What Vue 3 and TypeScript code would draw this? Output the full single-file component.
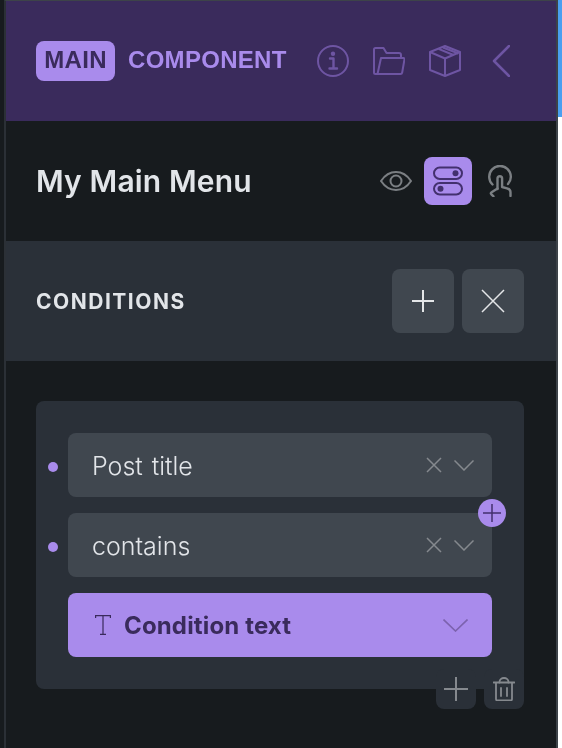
<script setup lang="ts">
const rows = ['Post title', 'contains']
</script>

<template>
  <div class="page">
    <div class="rail"></div>
    <aside class="panel">
      <header class="top">
        <div class="brand">
          <span class="badge"><span class="badge-text">MAIN</span></span>
          <span class="brand-name">COMPONENT</span>
        </div>
        <div class="top-icons">
          <svg width="32" height="32" viewBox="0 0 32 32" fill="none" stroke="#6e55a3" stroke-width="2">
            <circle cx="16" cy="16" r="15" />
            <circle cx="16" cy="8.800" r="2.200" fill="#6e55a3" stroke="none" />
            <path d="M13 13.500h3.500v9.500M12.500 23.500h7.500" stroke-width="2.400" stroke-linecap="round" stroke-linejoin="round" />
          </svg>
          <svg width="32" height="28" viewBox="0 0 32 28" fill="none" stroke="#6e55a3" stroke-width="2" stroke-linejoin="round" stroke-linecap="round">
            <path d="M4.500 27H2.500A1.500 1.500 0 0 1 1 25.500V2.500A1.500 1.500 0 0 1 2.500 1h8l3 5h12.500a2 2 0 0 1 2 2v3" />
            <path d="M8 11h22.500a1 1 0 0 1 1 1.200l-2.300 13.300a1.800 1.800 0 0 1-1.800 1.500H4.500z" />
          </svg>
          <svg width="32" height="32" viewBox="0 0 32 32" fill="none" stroke="#6e55a3" stroke-width="2" stroke-linejoin="round">
            <path d="M16 1 31 7v18l-15 6-15-6V7z" />
            <path d="M1 7l15 6.500L31 7M16 13.500V31M9.500 3.800l15 6.200M14 2.500l15.500 6" />
          </svg>
          <svg class="back" width="18" height="32" viewBox="0 0 18 32" fill="none" stroke="#6e55a3" stroke-width="2.500" stroke-linecap="round" stroke-linejoin="round">
            <path d="M17 1 2 16l15 15" />
          </svg>
        </div>
      </header>

      <section class="title-row">
        <h1 class="title">My Main Menu</h1>
        <div class="mode-icons">
          <svg width="32" height="20" viewBox="0 0 32 20" fill="none" stroke="#7b7f83" stroke-width="2">
            <path d="M1 10C5 4 10 1 16 1s11 3 15 9c-4 6-9 9-15 9S5 16 1 10z" stroke-linejoin="round" />
            <circle cx="16" cy="10" r="5.500" />
          </svg>
          <div class="mode-active">
            <svg width="30" height="30" viewBox="0 0 30 30" fill="none" stroke="#43306e" stroke-width="2">
              <rect x="1" y="1.500" width="28" height="11.500" rx="5.750" />
              <rect x="1" y="17" width="28" height="11.500" rx="5.750" />
              <circle cx="22.500" cy="7.200" r="3" fill="#43306e" stroke="none" />
              <circle cx="7.500" cy="22.800" r="3" fill="#43306e" stroke="none" />
            </svg>
          </div>
          <svg class="hand" width="24" height="32" viewBox="0 0 24 32" fill="none" stroke="#7b7f83" stroke-width="2.400" stroke-linecap="round" stroke-linejoin="round">
            <path d="M4.500 19.500A10.800 10.800 0 1 1 20 19" />
            <path d="M9.500 24V13.500a2.300 2.300 0 0 1 4.600 0V22l4.900 1.300c2 .6 3.500 2 3.500 4V31" />
            <path d="M9.500 23.500l-5.500 3.500c-1.500 1-1.500 1.500-.5 2.500l2 1.800" />
          </svg>
        </div>
      </section>

      <section class="section-head">
        <h2 class="section-title">CONDITIONS</h2>
        <div class="head-actions">
          <button type="button" class="head-btn">
            <svg width="24" height="24" viewBox="0 0 24 24" stroke="#e4e6e8" stroke-width="2" fill="none"><path d="M12 1v22M1 12h22" /></svg>
          </button>
          <button type="button" class="head-btn">
            <svg width="24" height="24" viewBox="0 0 24 24" stroke="#e4e6e8" stroke-width="1.500" fill="none"><path d="M1 1l22 22M23 1 1 23" /></svg>
          </button>
        </div>
      </section>

      <section class="body">
        <div class="card">
          <div v-for="(row, i) in rows" :key="row" class="row">
            <span class="dot"></span>
            <div class="select">
              <span class="select-text">{{ row }}</span>
              <svg width="16" height="16" viewBox="0 0 16 16" stroke="#85898e" stroke-width="1.500" fill="none"><path d="M1 1l14 14M15 1 1 15" /></svg>
              <svg class="chev" width="20" height="11" viewBox="0 0 20 11" stroke="#85898e" stroke-width="1.500" fill="none"><path d="M.5 .5 10 10 19.500 .5" /></svg>
            </div>
            <span v-if="i === 0" class="add-between">
              <svg width="18" height="18" viewBox="0 0 18 18" stroke="#43306e" stroke-width="1.500" fill="none"><path d="M9 0v18M0 9h18" /></svg>
            </span>
          </div>
          <div class="value">
            <span class="t-glyph">
              <svg width="16" height="20" viewBox="0 0 16 20" stroke="#3a2a5c" stroke-width="1.200" fill="none"><path d="M.6 3V.6h14.800V3M8 .6v18.800M5 19.400h6" /></svg>
            </span>
            <span class="value-text">Condition text</span>
            <svg class="value-chev" width="25" height="13" viewBox="0 0 25 13" stroke="#7c62ae" stroke-width="1.600" fill="none"><path d="M.5 .5 12.500 12 24.500 .5" /></svg>
          </div>
          <div class="card-tabs">
            <button type="button" class="tab">
              <svg width="24" height="24" viewBox="0 0 24 24" stroke="#85898e" stroke-width="2" fill="none"><path d="M12 0v24M0 12h24" /></svg>
            </button>
            <button type="button" class="tab">
              <svg width="22" height="24" viewBox="0 0 22 24" stroke="#85898e" stroke-width="1.800" fill="none" stroke-linecap="round" stroke-linejoin="round">
                <path d="M.5 5.500h21M3 5.500V22a1.500 1.500 0 0 0 1.500 1.500h13A1.500 1.500 0 0 0 19 22V5.500" />
                <path d="M6.500 5.500V5a4.500 4 0 0 1 9 0v.5M8 11v8M14 11v8" />
              </svg>
            </button>
          </div>
        </div>
      </section>
    </aside>
    <div class="side">
      <div class="backdrop"></div>
    </div>
  </div>
</template>

<style>
html,
body {
  margin: 0;
  background: #fff;
}
</style>

<style scoped>
.page {
  display: flex;
  width: 562px;
  height: 748px;
  overflow: hidden;
  font-family: Inter, "Liberation Sans", sans-serif;
  will-change: transform;
}

.rail {
  width: 4px;
  flex: none;
  background: #171b1e;
}

.panel {
  display: flex;
  flex-direction: column;
  width: 554px;
  flex: none;
  border-left: 2px solid #2b3036;
  border-right: 2px solid #3d4349;
  border-top: 1px solid #3d4349;
  box-sizing: border-box;
  background: #171b1e;
}

.side {
  flex: 1;
  background: #fff;
}

.backdrop {
  height: 117px;
  background: #4a9ff0;
}

.top {
  display: flex;
  align-items: center;
  justify-content: space-between;
  height: 120px;
  padding: 0 46px 0 30px;
  background: #3a2b5c;
  flex: none;
}

.brand {
  display: flex;
  align-items: center;
  gap: 13px;
  font-family: "Liberation Sans", Arial, sans-serif;
  font-weight: 700;
  font-size: 24px;
  letter-spacing: 0.3px;
}

.badge {
  display: flex;
  align-items: center;
  justify-content: center;
  width: 79px;
  height: 40px;
  border-radius: 8px;
  background: #a98bec;
  color: #3a2b5c;
}

.badge-text {
  margin-bottom: 3px;
}

.brand-name {
  margin-bottom: 3px;
  color: #a98bec;
}

.top-icons {
  display: flex;
  align-items: center;
  gap: 24px;
}

.back {
  margin-left: 7px;
}

.title-row {
  display: flex;
  align-items: center;
  justify-content: space-between;
  height: 120px;
  padding: 0 44px 0 30px;
  flex: none;
}

.title {
  margin: 0;
  font-size: 30px;
  font-weight: 600;
  letter-spacing: 0.15px;
  color: #e2e5e9;
}

.mode-icons {
  display: flex;
  align-items: center;
  gap: 12px;
}

.hand {
  margin-left: 4px;
}

.mode-active {
  display: flex;
  align-items: center;
  justify-content: center;
  width: 48px;
  height: 48px;
  border-radius: 8px;
  background: #a98bec;
}

.section-head {
  display: flex;
  align-items: center;
  justify-content: space-between;
  height: 120px;
  padding: 0 32px 0 30px;
  background: #2a3038;
  flex: none;
}

.section-title {
  margin: 0;
  font-size: 21px;
  font-weight: 700;
  letter-spacing: 1.5px;
  color: #e2e5e9;
}

.head-actions {
  display: flex;
  gap: 8px;
}

.head-btn {
  display: flex;
  align-items: center;
  justify-content: center;
  width: 62px;
  height: 64px;
  padding: 0;
  border: 0;
  border-radius: 8px;
  background: #40474f;
}

.body {
  padding: 40px 32px 40px 30px;
}

.card {
  position: relative;
  display: flex;
  flex-direction: column;
  gap: 16px;
  padding: 32px;
  border-radius: 8px;
  background: #2a3038;
}

.row {
  position: relative;
}

.dot {
  position: absolute;
  left: -20px;
  top: 29px;
  width: 10px;
  height: 10px;
  border-radius: 50%;
  background: #a98bec;
}

.select {
  display: flex;
  align-items: center;
  height: 64px;
  padding: 0 18px 0 24px;
  border-radius: 8px;
  background: #40474f;
}

.select-text {
  flex: 1;
  padding-top: 2px;
  font-size: 25px;
  font-weight: 300;
  word-spacing: 2px;
  color: #e2e5e9;
}

.chev {
  margin-left: 12px;
}

.add-between {
  position: absolute;
  right: -14px;
  bottom: -30px;
  z-index: 1;
  display: flex;
  align-items: center;
  justify-content: center;
  width: 28px;
  height: 28px;
  border-radius: 50%;
  background: #a98bec;
}

.value {
  display: flex;
  align-items: center;
  height: 64px;
  padding: 0 24px 0 27px;
  border-radius: 8px;
  background: #a98bec;
}

.t-glyph {
  display: flex;
  margin-right: 13px;
}

.value-text {
  flex: 1;
  font-size: 24px;
  font-weight: 700;
  letter-spacing: 0.15px;
  color: #3a2b5c;
}

.card-tabs {
  position: absolute;
  right: 0;
  bottom: -20px;
  display: flex;
  gap: 8px;
}

.tab {
  display: flex;
  align-items: center;
  justify-content: center;
  width: 40px;
  height: 40px;
  padding: 0;
  border: 0;
  border-radius: 8px;
  background: #2a3038;
}
</style>
